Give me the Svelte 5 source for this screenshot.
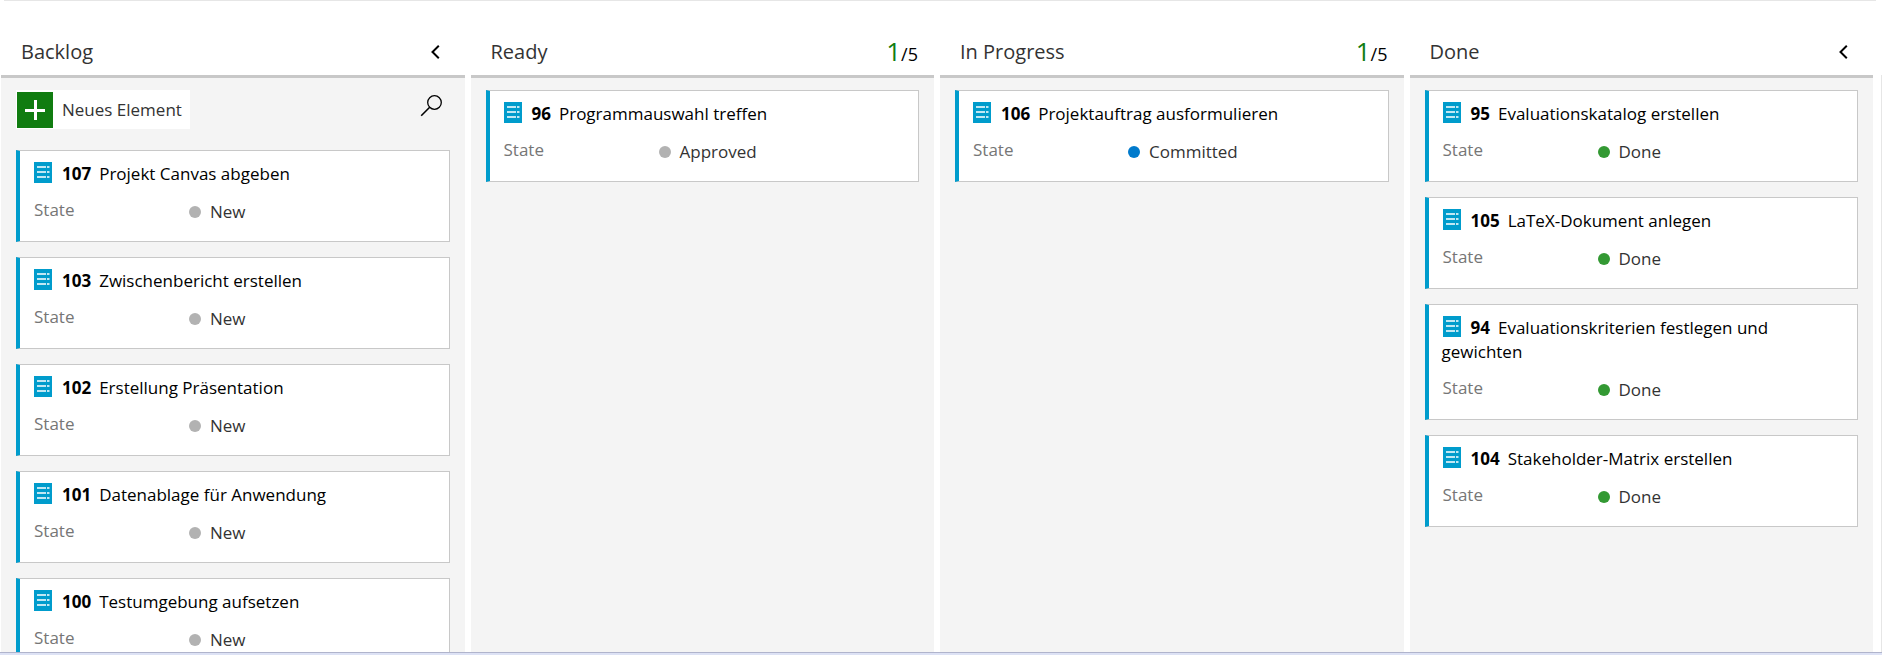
<script>
  const columns = [
    {
      name: 'Backlog',
      collapsible: true,
      canAdd: true,
      cards: [
        { id: 107, title: 'Projekt Canvas abgeben', state: 'New' },
        { id: 103, title: 'Zwischenbericht erstellen', state: 'New' },
        { id: 102, title: 'Erstellung Präsentation', state: 'New' },
        { id: 101, title: 'Datenablage für Anwendung', state: 'New' },
        { id: 100, title: 'Testumgebung aufsetzen', state: 'New' }
      ]
    },
    {
      name: 'Ready',
      limit: 5,
      cards: [{ id: 96, title: 'Programmauswahl treffen', state: 'Approved' }]
    },
    {
      name: 'In Progress',
      limit: 5,
      cards: [{ id: 106, title: 'Projektauftrag ausformulieren', state: 'Committed' }]
    },
    {
      name: 'Done',
      collapsible: true,
      cards: [
        { id: 95, title: 'Evaluationskatalog erstellen', state: 'Done' },
        { id: 105, title: 'LaTeX-Dokument anlegen', state: 'Done' },
        { id: 94, title: 'Evaluationskriterien festlegen und gewichten', state: 'Done' },
        { id: 104, title: 'Stakeholder-Matrix erstellen', state: 'Done' }
      ]
    }
  ];
</script>

<main class="page">
  <div class="topline"></div>
  <div class="scroller">
    <div class="board">
      {#each columns as column}
        <section class="column">
          <header class="head">
            <h2>{column.name}</h2>
            {#if column.collapsible}
              <button class="icon-button" aria-label="Collapse column">
                <svg width="10" height="14" viewBox="0 0 10 14">
                  <path d="M7.800 .8 1.500 7l6.300 6.200" fill="none" stroke="#000" stroke-width="2" />
                </svg>
              </button>
            {:else}
              <div class="limit"><span class="count">{column.cards.length}</span>/{column.limit}</div>
            {/if}
          </header>
          <div class="body">
            {#if column.canAdd}
              <div class="tools">
                <button class="add">
                  <svg width="36" height="36" viewBox="0 0 36 36">
                    <rect width="36" height="36" fill="#107c10" />
                    <path d="M18.500 8v20M8 18.500h20" stroke="#fff" stroke-width="3" />
                  </svg>
                  Neues Element
                </button>
                <button class="icon-button" aria-label="Search">
                  <svg width="22" height="22" viewBox="0 0 22 22">
                    <g fill="none" stroke="#000" stroke-width="1.3">
                      <circle cx="14.500" cy="7.5" r="6.8" />
                      <path d="M9.700 12.3 1.200 20.8" stroke-width="1.6" />
                    </g>
                  </svg>
                </button>
              </div>
            {/if}
            {#each column.cards as card}
              <article class="card">
                <h3>
                  <svg class="type" width="18" height="21" viewBox="0 0 18 21">
                    <rect width="18" height="21" fill="#009ccc" />
                    <path
                      d="M3 5h9M13 5h2.500M3 10h9M13 10h2.500M3 15h9M13 15h2.500"
                      stroke="#fff"
                      stroke-width="1.4"
                    />
                  </svg><strong>{card.id}</strong>{card.title}
                </h3>
                <div class="field">
                  <span class="label">State</span>
                  <span class="value"><i class="dot {card.state.toLowerCase()}"></i>{card.state}</span>
                </div>
              </article>
            {/each}
          </div>
        </section>
      {/each}
    </div>
    <div class="next"></div>
  </div>
  <div class="scrollbar"></div>
</main>

<style>
  :global(body) {
    margin: 0;
    background: #fff;
  }
  .page {
    display: flex;
    flex-direction: column;
    height: 100vh;
    overflow: hidden;
    font-family: 'Open Sans', 'Noto Sans', sans-serif;
    font-size: 17px;
    line-height: 24px;
    color: #333;
  }
  .topline {
    height: 1px;
    flex: none;
    margin: 0 6px 0 4px;
    background: #e6e6e6;
  }
  .scroller {
    flex: 1;
    min-height: 0;
    display: flex;
    gap: 8px;
    padding-left: 1px;
    overflow: hidden;
  }
  .board {
    flex: 1;
    display: grid;
    grid-template-columns: repeat(4, minmax(0, 1fr));
    gap: 6px;
  }
  .next {
    width: 1px;
    margin-top: 74px;
    background: #e6e6e6;
  }
  .column {
    display: flex;
    flex-direction: column;
    min-height: 0;
  }
  .head {
    flex: none;
    display: flex;
    align-items: center;
    justify-content: space-between;
    height: 46px;
    padding: 28px 16px 0 20px;
    border-bottom: 3px solid #c8c8c8;
  }
  h2,
  h3 {
    margin: 0;
    font-weight: 400;
  }
  h2 {
    font-size: 20px;
  }
  button {
    border: 0;
    font: inherit;
    color: inherit;
    cursor: pointer;
  }
  .icon-button {
    display: flex;
    padding: 0 8px;
    background: none;
  }
  .limit {
    font-size: 18px;
    color: #000;
  }
  .count {
    font-size: 26px;
    color: #107c10;
  }
  .body {
    flex: 1;
    min-height: 0;
    display: flex;
    flex-direction: column;
    gap: 15px;
    padding: 12px 15px 0;
    background: #f4f4f4;
    overflow: hidden;
  }
  .tools {
    flex: none;
    display: flex;
    justify-content: space-between;
    align-items: flex-start;
    height: 45px;
  }
  .tools .icon-button {
    padding-top: 5px;
  }
  .add {
    display: flex;
    align-items: center;
    gap: 9px;
    height: 39px;
    padding: 1px 8px 0 1px;
    background: #fff;
  }
  .card {
    flex: none;
    padding: 11px 13px 17px;
    border: 1px solid #c8c8c8;
    border-left: 4px solid #009ccc;
    background: #fff;
  }
  h3 {
    font-size: 17px;
    color: #000;
  }
  .type {
    margin: 0 10px 0 1px;
    vertical-align: -3px;
  }
  strong {
    margin-right: 8px;
    font-weight: 700;
  }
  .field {
    display: grid;
    grid-template-columns: 155px 1fr;
    margin-top: 12px;
    padding-left: 1px;
  }
  .label {
    color: #767676;
  }
  .value {
    display: flex;
    align-items: center;
    gap: 9px;
    padding-top: 2px;
  }
  .dot {
    width: 12px;
    height: 12px;
    border-radius: 50%;
    background: #b2b2b2;
  }
  .dot.committed {
    background: #007acc;
  }
  .dot.done {
    background: #339933;
  }
  .scrollbar {
    flex: none;
    height: 2px;
    border-top: 1px solid #b0b4cc;
    background: #dde2f5;
  }
</style>
